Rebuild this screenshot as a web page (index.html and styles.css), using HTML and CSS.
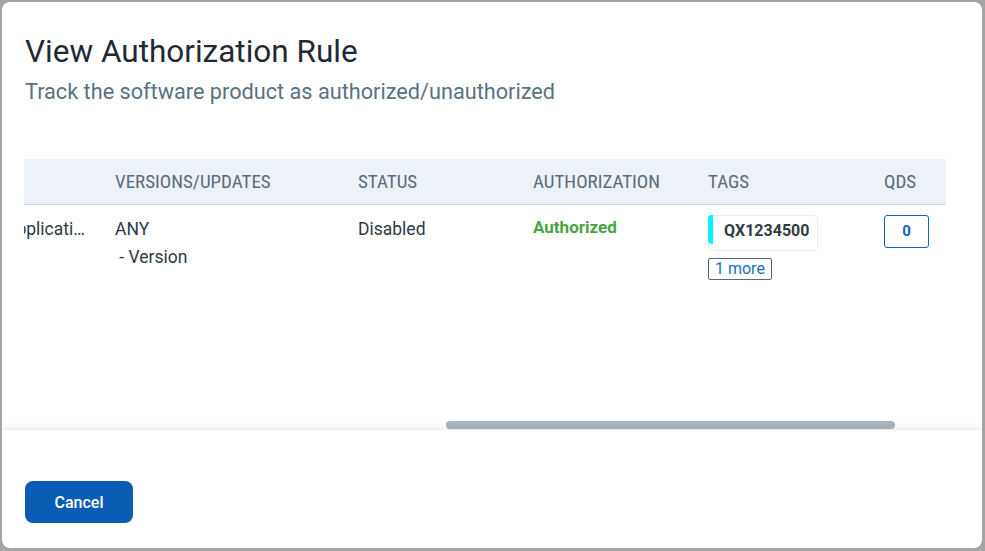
FILE: index.html
```html
<!DOCTYPE html>
<html>
<head>
<meta charset="utf-8">
<link rel="stylesheet" href="styles.css">
</head>
<body>
<div class="dialog">
  <div class="head">
    <h1 class="title">View Authorization Rule</h1>
    <p class="subtitle">Track the software product as authorized/unauthorized</p>
  </div>
  <div class="body">
    <div class="scroller">
      <table class="grid">
        <thead>
          <tr>
            <th class="c1"></th>
            <th class="c2">VERSIONS/UPDATES</th>
            <th class="c3">STATUS</th>
            <th class="c4">AUTHORIZATION</th>
            <th class="c5">TAGS</th>
            <th class="c6">QDS</th>
          </tr>
        </thead>
        <tbody>
          <tr>
            <td class="c1"><span class="name">Applicati…</span></td>
            <td class="c2"><div>ANY</div><div class="sub">&nbsp;- Version</div></td>
            <td class="c3">Disabled</td>
            <td class="c4"><span class="auth">Authorized</span></td>
            <td class="c5">
              <div class="tag">QX1234500</div>
              <div class="more">1 more</div>
            </td>
            <td class="c6"><button class="qds">0</button></td>
          </tr>
        </tbody>
      </table>
    </div>
    <div class="track"><div class="thumb"></div></div>
  </div>
  <div class="foot">
    <button class="cancel">Cancel</button>
  </div>
</div>
</body>
</html>
```
FILE: styles.css
```css
html, body {
  margin: 0;
  padding: 0;
  background: #a4a4a4;
  height: 551px;
  overflow: hidden;
}
.dialog {
  margin: 2px 3px 3px 2px;
  height: 546px;
  background: #fff;
  border-radius: 8px;
  display: flex;
  flex-direction: column;
  font-family: Roboto, "Liberation Sans", sans-serif;
  overflow: hidden;
}
.head {
  padding: 29px 24px 0 23px;
  height: 157px;
  box-sizing: border-box;
  flex: none;
}
.title {
  margin: 0;
  font-size: 31.5px;
  line-height: 42px;
  font-weight: 400;
  color: #1f2a33;
}
.subtitle {
  margin: 5px 0 0;
  font-size: 21.7px;
  line-height: 28px;
  color: #5a7282;
}
.body {
  margin-left: 22px;
  width: 922px;
  height: 270px;
  flex: none;
  display: flex;
  flex-direction: column;
}
.scroller {
  flex: 1;
  overflow: hidden;
}
.grid {
  border-collapse: collapse;
  table-layout: fixed;
  margin-left: -27px;
  width: 1100px;
}
.grid th, .grid td {
  box-sizing: border-box;
}
.grid th {
  background: #edf2f8;
  height: 45px;
  border-bottom: 1px solid #cfd6dd;
  text-align: left;
  font-weight: 400;
  font-size: 19px;
  font-stretch: 75%;
  color: #5b6b78;
  padding: 0 0 0 16px;
  white-space: nowrap;
}
.grid td {
  vertical-align: top;
  padding: 10px 0 0 16px;
  font-size: 17.5px;
  line-height: 28px;
  color: #2e3a44;
  white-space: nowrap;
}
.grid td.c1 { padding-left: 8px; }
.c1 { width: 102px; }
.c2 { width: 243px; }
.c3 { width: 175px; }
.c4 { width: 175px; }
.c5 { width: 176px; }
.c6 { width: 229px; }
.name { display: block; }
.auth {
  color: #4aa342;
  font-weight: 700;
  font-size: 17px;
  position: relative;
  top: -2px;
}
.tag {
  display: inline-block;
  position: relative;
  border: 1px solid #e2f0f4;
  border-radius: 5px;
  padding: 0 8px 0 15px;
  height: 36px;
  box-sizing: border-box;
  line-height: 30px;
  font-size: 16px;
  font-weight: 700;
  color: #333b42;
  margin-top: 0;
}
.tag::before {
  content: "";
  position: absolute;
  left: -1px;
  top: -1px;
  bottom: 6px;
  width: 5px;
  background: #00f5ff;
  border-radius: 4px 0 0 4px;
}
.more {
  display: block;
  width: fit-content;
  margin-top: 7px;
  border: 1px solid #56697a;
  border-radius: 2px;
  padding: 0 6px;
  height: 22px;
  box-sizing: border-box;
  line-height: 20px;
  font-size: 16px;
  color: #1b6fc2;
}
.qds {
  width: 45px;
  height: 33px;
  border: 1px solid #1761b8;
  border-radius: 3px;
  background: #fff;
  color: #1761b8;
  font-family: Roboto, sans-serif;
  font-weight: 700;
  font-size: 15px;
  padding: 0;
  margin-top: 0;
  display: block;
}
.track {
  height: 8px;
  flex: none;
}
.thumb {
  margin-left: 422px;
  width: 449px;
  height: 8px;
  border-radius: 4px;
  background: #a8b5be;
}
.foot {
  flex: 1;
  border-top: 1px solid #ececec;
  box-shadow: 0 -3px 6px rgba(0,0,0,0.05);
  padding: 51px 0 0 23px;
}
.cancel {
  width: 108px;
  height: 42px;
  border: none;
  border-radius: 8px;
  background: #0b5cb5;
  color: #fff;
  font-family: Roboto, sans-serif;
  font-size: 16px;
  font-weight: 500;
}
```
